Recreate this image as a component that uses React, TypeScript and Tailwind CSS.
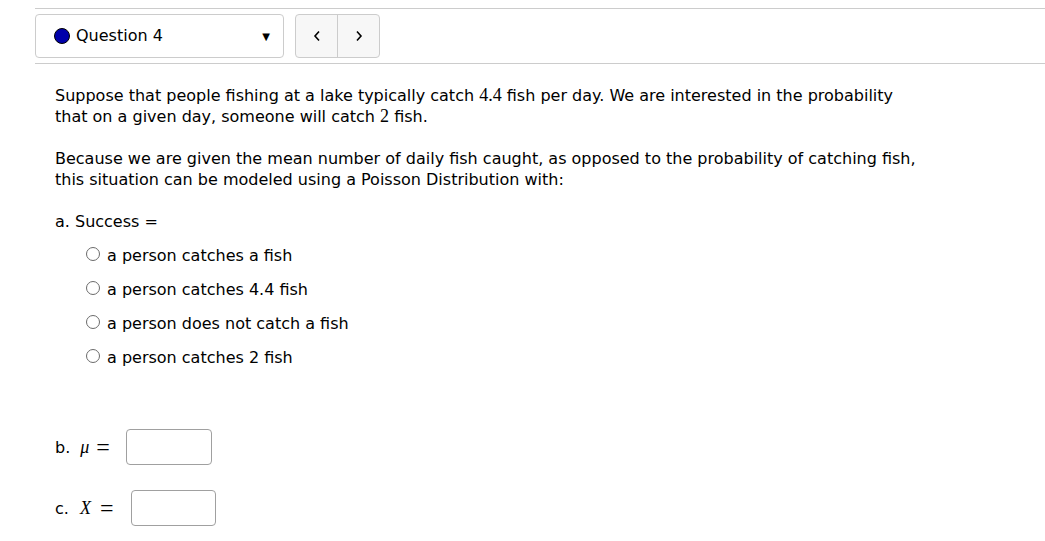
import React from 'react';

const Radio: React.FC<{ label: string }> = ({ label }) => (
  <label className="flex items-center h-[34px]">
    <span className="w-[14px] h-[14px] rounded-full border border-[#6b6b6b] bg-white mr-[7px] mt-[-3px]" />
    <span>{label}</span>
  </label>
);

const M: React.FC<{ children: React.ReactNode; italic?: boolean; className?: string }> = ({ children, italic, className }) => (
  <span className={`font-['Liberation_Serif',serif] text-[18px] ${italic ? 'italic' : ''} ${className ?? ''}`}>{children}</span>
);

export default function App() {
  return (
    <div className="bg-white min-h-[541px] w-[1045px] text-black font-['DejaVu_Sans',sans-serif] text-[16px]">
      <div className="pl-[35px] pt-[8px]">
        <div className="border-t border-[#cccccc] pt-[5px] pb-[5px] flex items-center gap-[11px]">
          <div className="w-[249px] h-[44px] border border-[#cccccc] rounded-[4px] flex items-center pl-[18px] pr-[12px]">
            <span className="w-[16px] h-[16px] rounded-full bg-[#0000aa] border border-black mr-[6px]" />
            <span className="flex-1 text-[16px]">Question 4</span>
            <span className="text-[10px] mr-[1px]">&#9660;</span>
          </div>
          <div className="h-[44px] w-[85px] border border-[#cccccc] rounded-[4px] bg-[#f7f7f7] flex">
            <div className="w-[42px] flex items-center justify-center border-r border-[#cccccc]">
              <svg width="8" height="12" viewBox="0 0 8 12"><path d="M6 1.5 L2 6 L6 10.5" fill="none" stroke="#000" strokeWidth="1.6" /></svg>
            </div>
            <div className="flex-1 flex items-center justify-center">
              <svg width="8" height="12" viewBox="0 0 8 12"><path d="M2 1.5 L6 6 L2 10.5" fill="none" stroke="#000" strokeWidth="1.6" /></svg>
            </div>
          </div>
        </div>
        <div className="border-t border-[#cccccc]" />
      </div>
      <div className="pl-[55px] pt-[21px] leading-[21px]">
        <p>
          Suppose that people fishing at a lake typically catch <M>4.4</M> fish per day. We are interested in the probability
          <br />
          that on a given day, someone will catch <M>2</M> fish.
        </p>
        <p className="mt-[21px]">
          Because we are given the mean number of daily fish caught, as opposed to the probability of catching fish,
          <br />
          this situation can be modeled using a Poisson Distribution with:
        </p>
        <p className="mt-[21px]">a. Success =</p>
        <div className="pl-[31px] pt-[6px]">
          <Radio label="a person catches a fish" />
          <Radio label="a person catches 4.4 fish" />
          <Radio label="a person does not catch a fish" />
          <Radio label="a person catches 2 fish" />
        </div>
        <div className="mt-[55px] flex items-center">
          <span>b.</span>
          <M italic className="ml-[10px]">μ</M>
          <M className="ml-[7px] text-[24px] leading-none">=</M>
          <div className="ml-[16px] w-[86px] h-[36px] border border-[#a0a0a0] rounded-[4px]" />
        </div>
        <div className="mt-[25px] flex items-center">
          <span>c.</span>
          <M italic className="ml-[11px]">X</M>
          <M className="ml-[9px] text-[24px] leading-none">=</M>
          <div className="ml-[18px] w-[85px] h-[36px] border border-[#a0a0a0] rounded-[4px]" />
        </div>
      </div>
    </div>
  );
}
